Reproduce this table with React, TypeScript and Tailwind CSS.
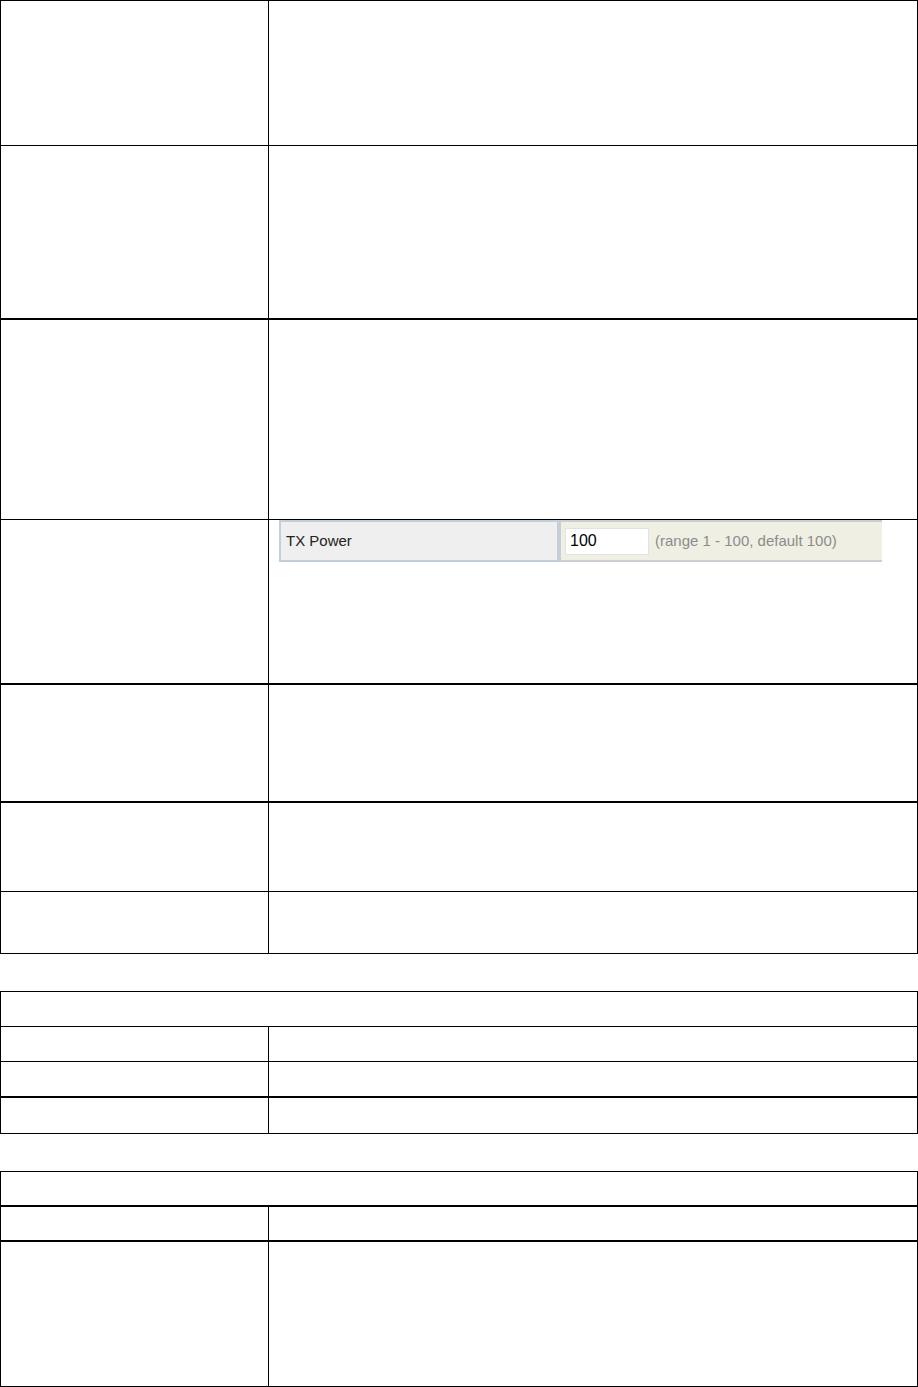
import React from 'react'

type RowProps = {
  className: string
  span?: boolean
  children?: React.ReactNode
}

const Row = ({ className, span, children }: RowProps) => {
  if (span) {
    return <div className={`border-black ${className}`} />
  }
  return (
    <div className={`flex border-black ${className}`}>
      <div className="w-[268px] shrink-0 border-r border-black" />
      <div className="flex-1">{children}</div>
    </div>
  )
}

const TxPower = () => (
  <div className="ml-[10px] flex h-[42px] w-[603px] font-['Liberation_Sans',Arial,sans-serif]">
    <div className="flex w-[280px] items-center border-2 border-[#c3cedb] bg-[#efefef] pl-[5px] text-[15px] text-[#222]">
      TX Power
    </div>
    <div className="flex flex-1 items-center border-y-2 border-l-2 border-[#c9ced5] bg-[#efefe4] pl-[4px]">
      <div className="flex h-[27px] w-[84px] items-center border border-[#e2e2e2] bg-white pl-[4px] text-[16px] text-black">
        100
      </div>
      <span className="ml-[6px] text-[15px] text-[#8c8c8c]">(range 1 - 100, default 100)</span>
    </div>
  </div>
)

const App = () => {
  return (
    <div className="h-[1387px] w-[918px] bg-white">
      <div className="border-x border-t border-black">
        <Row className="h-[145px] border-b" />
        <Row className="h-[174px] border-b-2" />
        <Row className="h-[200px] border-b" />
        <Row className="h-[165px] border-b-2">
          <TxPower />
        </Row>
        <Row className="h-[118px] border-b-2" />
        <Row className="h-[89px] border-b" />
        <Row className="h-[62px] border-b" />
      </div>

      <div className="mt-[37px] border-x border-t border-black">
        <Row span className="h-[35px] border-b" />
        <Row className="h-[35px] border-b" />
        <Row className="h-[36px] border-b-2" />
        <Row className="h-[36px] border-b" />
      </div>

      <div className="mt-[37px] border-x border-t border-black">
        <Row span className="h-[35px] border-b-2" />
        <Row className="h-[35px] border-b-2" />
        <Row className="h-[145px] border-b" />
      </div>
    </div>
  )
}

export default App
